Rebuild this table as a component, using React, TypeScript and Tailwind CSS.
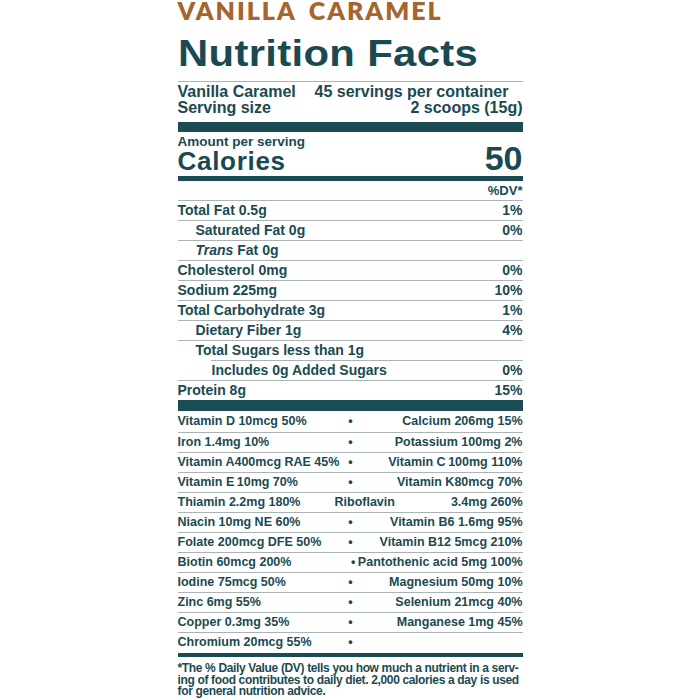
import React from 'react';

type Row = { label: React.ReactNode; dv: string; cls: string };

const nutrients: Row[] = [
  { label: 'Total Fat 0.5g', dv: '1%', cls: '' },
  { label: 'Saturated Fat 0g', dv: '0%', cls: 'pl-[18px]' },
  { label: <><i>Trans</i> Fat 0g</>, dv: '', cls: 'pl-[18px]' },
  { label: 'Cholesterol 0mg', dv: '0%', cls: '' },
  { label: 'Sodium 225mg', dv: '10%', cls: '' },
  { label: 'Total Carbohydrate 3g', dv: '1%', cls: '' },
  { label: 'Dietary Fiber 1g', dv: '4%', cls: 'pl-[18px]' },
  { label: 'Total Sugars less than 1g', dv: '', cls: 'pl-[18px]' },
  { label: 'Includes 0g Added Sugars', dv: '0%', cls: 'ml-[33px] pl-[1px]' },
  { label: 'Protein 8g', dv: '15%', cls: '' },
];

const vitamins: [string, string, string][] = [
  ['Vitamin D 10mcg 50%', '•', 'Calcium 206mg 15%'],
  ['Iron 1.4mg 10%', '•', 'Potassium 100mg 2%'],
  ['Vitamin A400mcg RAE 45%', '•', 'Vitamin C\u2009100mg 110%'],
  ['Vitamin E\u200910mg 70%', '•', 'Vitamin K80mcg 70%'],
  ['Thiamin 2.2mg 180%', '', ''],
  ['Niacin 10mg NE 60%', '•', 'Vitamin B6 1.6mg 95%'],
  ['Folate 200mcg DFE 50%', '•', 'Vitamin B12 5mcg 210%'],
  ['Biotin 60mcg 200%', '', '•\u2009Pantothenic acid 5mg 100%'],
  ['Iodine 75mcg 50%', '•', 'Magnesium 50mg 10%'],
  ['Zinc 6mg 55%', '•', 'Selenium 21mcg 40%'],
  ['Copper 0.3mg 35%', '•', 'Manganese 1mg 45%'],
  ['Chromium 20mcg 55%', '•', ''],
];

function NutrientRow({ row }: { row: Row }) {
  return (
    <div
      className={`flex h-[20px] items-center justify-between border-t border-[#aab4b5] text-[14px] leading-[19px] ${row.cls}`}
    >
      <span>{row.label}</span>
      <span>{row.dv}</span>
    </div>
  );
}

function VitaminRow({ v, first }: { v: [string, string, string]; first: boolean }) {
  const base = first
    ? 'h-[21px]'
    : 'h-[20px] border-t border-[#aab4b5]';
  if (v[0].startsWith('Thiamin')) {
    return (
      <div className={`grid grid-cols-[157px_auto_minmax(0,1fr)] items-center whitespace-nowrap text-[12.5px] leading-[19px] ${base}`}>
        <span>{v[0]}</span>
        <span>Riboflavin</span>
        <span className="flex justify-end">3.4mg 260%</span>
      </div>
    );
  }
  return (
    <div className={`grid grid-cols-[167px_12px_minmax(0,1fr)] items-center whitespace-nowrap text-[12.5px] leading-[19px] ${base}`}>
      <span>{v[0]}</span>
      <span className="text-center">{v[1]}</span>
      <span className="flex justify-end">
        <span className="shrink-0">{v[2]}</span>
      </span>
    </div>
  );
}

export default function App() {
  return (
    <div className="min-h-[700px] w-full bg-white">
      <div className="mx-auto flex w-[345px] flex-col font-['Liberation_Sans',Arial,sans-serif] font-bold text-[#1a4a51]">
        <div className="flex gap-[12px] font-['Lato',sans-serif] text-[25px] leading-[21px] font-extrabold tracking-[2px] text-[#a6652d]">
          <span>VANILLA</span>
          <span>CARAMEL</span>
        </div>

        <h1 className="mt-[13px] origin-left scale-x-[1.13] text-[37px] leading-[40px] tracking-[0.3px]">
          Nutrition Facts
        </h1>

        <div className="mt-[7px] border-t border-[#a9b3b4] pt-[2px] text-[16px] leading-[16px]">
          <div className="grid grid-cols-[137px_1fr]">
            <span>Vanilla Caramel</span>
            <span>45 servings per container</span>
            <span>Serving size</span>
            <span className="text-right">2 scoops (15g)</span>
          </div>
        </div>

        <div className="mt-[6px] h-[10px] bg-[#1b4c53]" />

        <div className="mt-[4px] text-[13.5px] leading-[12px]">Amount per serving</div>
        <div className="flex items-baseline justify-between">
          <span className="text-[26px] leading-[20px] tracking-[0.7px]">Calories</span>
          <span className="text-[34px] leading-[20px]">50</span>
        </div>

        <div className="mt-[5px] h-[5px] bg-[#1b4c53]" />

        <div className="flex h-[19px] items-center justify-end text-[13px] leading-[19px]">%DV*</div>
        {nutrients.map((r, i) => (
          <NutrientRow key={i} row={r} />
        ))}

        <div className="h-[11px] bg-[#1b4c53]" />

        {vitamins.map((v, i) => (
          <VitaminRow key={i} v={v} first={i === 0} />
        ))}

        <div className="mt-[1px] h-[4px] bg-[#1b4c53]" />

        <p className="mt-[6px] whitespace-nowrap text-[12px] leading-[11.6px] tracking-[-0.35px]">
          *The % Daily Value (DV) tells you how much a nutrient in a serv-
          <br />
          ing of food contributes to daily diet. 2,000 calories a day is used
          <br />
          for general nutrition advice.
        </p>
      </div>
    </div>
  );
}
